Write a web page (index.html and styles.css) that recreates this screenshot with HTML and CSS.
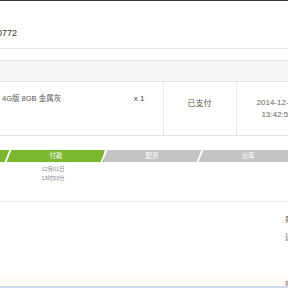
FILE: index.html
```html
<!DOCTYPE html>
<html lang="zh-CN">
<head>
  <meta charset="UTF-8" />
  <title>订单详情</title>
  <link rel="stylesheet" href="styles.css">
</head>
<body>
  <div class="topbar"></div>

  <div class="page">
    <div class="order-head">
      <span class="order-no">订单号：201412010772</span>
    </div>

    <table class="goods">
      <thead>
        <tr>
          <th class="col-goods"></th>
          <th class="col-status"></th>
          <th class="col-time"></th>
          <th class="col-more"></th>
        </tr>
      </thead>
      <tbody>
        <tr>
          <td class="col-goods">
            <div class="goods-line">
              <span class="goods-name">4G版 8GB 金属灰</span>
              <span class="goods-qty">x 1</span>
            </div>
          </td>
          <td class="col-status">已支付</td>
          <td class="col-time">2014-12-01<br>13:42:57</td>
          <td class="col-more"></td>
        </tr>
      </tbody>
    </table>

    <div class="progress">
      <div class="step done">
        <div class="step-bar">提交订单</div>
        <div class="step-time">12月01日<br>13时42分</div>
      </div>
      <div class="step done">
        <div class="step-bar">付款</div>
        <div class="step-time">12月01日<br>13时53分</div>
      </div>
      <div class="step">
        <div class="step-bar">配货</div>
      </div>
      <div class="step">
        <div class="step-bar">出库</div>
      </div>
      <div class="step">
        <div class="step-bar">完成</div>
      </div>
    </div>

    <div class="summary">
      <div class="sum-row">商品总额：</div>
      <div class="sum-row">运　　费：</div>
      <div class="sum-row total">应付总额：</div>
    </div>
  </div>

  <div class="footer"></div>
</body>
</html>
```

FILE: styles.css
```css
body {
  margin: 0;
  height: 288px;
  overflow: hidden;
  font-family: 'Liberation Sans', 'Noto Sans CJK SC', sans-serif;
  color: #444;
  background: #fff;
  display: flex;
  flex-direction: column;
}
.topbar {
  height: 1px;
  flex-shrink: 0;
  background: #3a3a3a;
}
.page {
  width: 560px;
  margin-left: -120px;
  flex: 1;
  overflow: hidden;
}
.order-head {
  padding: 26px 0 9px 41px;
  border-bottom: 1px solid #e8e8e8;
  line-height: 12px;
  font-size: 9px;
  color: #333;
}
.goods {
  width: 100%;
  margin-top: 11px;
  border-collapse: collapse;
  table-layout: fixed;
  font-size: 8px;
}
.goods th {
  height: 20px;
  padding: 0;
  background: #f7f7f7;
  border-top: 1px solid #e5e5e5;
  border-bottom: 1px solid #e5e5e5;
}
.goods tbody tr {
  height: 54px;
}
.goods td {
  padding: 0;
  vertical-align: top;
  text-align: center;
  border-bottom: 1px solid #e5e5e5;
  color: #555;
}
.col-goods { width: 283px; }
.col-status { width: 73px; }
.col-time { width: 82px; }
.goods td.col-status,
.goods td.col-time,
.goods td.col-more {
  border-left: 1px solid #ebebeb;
}
.goods td.col-goods {
  text-align: left;
}
.goods-line {
  display: flex;
  justify-content: space-between;
  padding: 11px 18px 0 122px;
  line-height: 11px;
}
.goods-name {
  font-size: 7.5px;
}
.goods-qty {
  color: #444;
}
.goods td.col-status {
  padding-top: 16px;
  line-height: 11px;
}
.goods td.col-time {
  padding-top: 15px;
  line-height: 12px;
  color: #666;
}
.progress {
  display: flex;
  margin: 14px 0 0 32px;
  padding-bottom: 16px;
  border-bottom: 1px solid #ececec;
  height: 35px;
}
.step {
  width: 96px;
  flex-shrink: 0;
  position: relative;
}
.step-bar {
  height: 12px;
  line-height: 12px;
  font-size: 6.5px;
  color: #fff;
  text-align: center;
  background: #c4c4c4;
}
.step.done .step-bar {
  background: #7cb82f;
}
.step + .step::before {
  content: "";
  position: absolute;
  left: -1px;
  top: 0;
  width: 2px;
  height: 12px;
  background: #fff;
  transform: skewX(-22deg);
}
.step-time {
  margin-top: 3px;
  padding-right: 6px;
  font-size: 5.5px;
  line-height: 9px;
  color: #888;
  text-align: center;
}
.summary {
  margin-left: 405px;
  padding-top: 12px;
}
.sum-row {
  font-size: 8px;
  line-height: 12px;
  color: #555;
  margin-bottom: 6px;
  white-space: nowrap;
}
.sum-row.total {
  margin: 23px 0 0 -405px;
  padding: 12px 0 2px 405px;
  background: linear-gradient(#fff, #fff9ef);
}
.footer {
  height: 2px;
  flex-shrink: 0;
  background: #cfdbee;
}
```
